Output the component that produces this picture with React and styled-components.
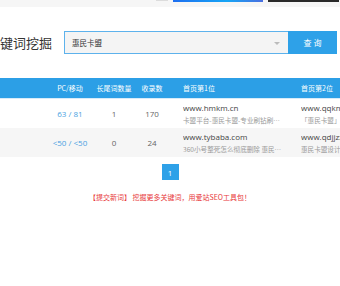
import React from 'react';
import styled, { createGlobalStyle } from 'styled-components';

const GlobalStyle = createGlobalStyle`
  html, body {
    margin: 0;
    padding: 0;
    background: #fff;
    overflow: hidden;
  }
  body {
    font-family: "Open Sans", "Noto Sans CJK SC", sans-serif;
    color: #555;
  }
`;

const rows = [
  {
    pcMobile: '63 / 81',
    longTail: '1',
    indexed: '170',
    first: { url: 'www.hmkm.cn', desc: '卡盟平台-惠民卡盟-专业刷钻刷赞平台' },
    second: { url: 'www.qqkm.net', desc: '「惠民卡盟」官方网站' },
  },
  {
    pcMobile: '<50 / <50',
    longTail: '0',
    indexed: '24',
    first: { url: 'www.tybaba.com', desc: '360小号整死怎么彻底删除 惠民卡盟' },
    second: { url: 'www.qdjjzx.com', desc: '惠民卡盟设计网站' },
  },
];

const App = () => {
  return (
    <Page>
      <GlobalStyle />
      <TopStrip>
        <Thumb $w="12px" $h="1px" $bg="#dcdcdc" />
        <Thumb $w="90px" $h="2px" $bg="linear-gradient(90deg, #1e6ff0, #16a5f5 60%, #4a6fe0)" />
        <Thumb $w="71px" $h="2px" $bg="#2a2a2a" />
      </TopStrip>

      <SearchRow>
        <Title>键词挖掘</Title>
        <InputBox>
          <InputText>惠民卡盟</InputText>
          <Caret />
        </InputBox>
        <SearchBtn>查 询</SearchBtn>
      </SearchRow>

      <TableWrap>
        <HeadRow>
          <Cell />
          <Cell $center>PC/移动</Cell>
          <Cell $center>长尾词数量</Cell>
          <Cell $center>收录数</Cell>
          <Cell $pad>首页第1位</Cell>
          <Cell $pad>首页第2位</Cell>
        </HeadRow>
        {rows.map((r, i) => (
          <BodyRow key={i} $alt={i % 2 === 1}>
            <Cell />
            <Cell $center>
              <LinkNum>{r.pcMobile}</LinkNum>
            </Cell>
            <Cell $center>{r.longTail}</Cell>
            <Cell $center>{r.indexed}</Cell>
            <Cell $pad>
              <SiteBlock>
                <SiteUrl>{r.first.url}</SiteUrl>
                <SiteDesc>{r.first.desc}</SiteDesc>
              </SiteBlock>
            </Cell>
            <Cell $pad>
              <SiteBlock>
                <SiteUrl>{r.second.url}</SiteUrl>
                <SiteDesc>{r.second.desc}</SiteDesc>
              </SiteBlock>
            </Cell>
          </BodyRow>
        ))}
      </TableWrap>

      <Pager>
        <PageNum>1</PageNum>
      </Pager>

      <Notice>【提交新词】 挖掘更多关键词，用爱站SEO工具包！</Notice>
    </Page>
  );
};

export default App;

const Page = styled.div`
  width: 340px;
  height: 286px;
  overflow: hidden;
  background: #fff;
`;

const TopStrip = styled.div`
  display: flex;
  align-items: flex-start;
  gap: 5px;
  height: 7px;
  padding-left: 156px;
  background: #f6f6f6;
`;

const Thumb = styled.div`
  flex: none;
  width: ${(p) => p.$w};
  height: ${(p) => p.$h};
  background: ${(p) => p.$bg};
`;

const SearchRow = styled.div`
  display: flex;
  align-items: center;
  margin-top: 24px;
  height: 23px;
`;

const Title = styled.h2`
  width: 64px;
  margin: 0;
  font-family: "Noto Sans CJK SC", sans-serif;
  font-size: 13px;
  font-weight: 400;
  color: #333;
  white-space: nowrap;
`;

const InputBox = styled.div`
  position: relative;
  display: flex;
  align-items: center;
  box-sizing: border-box;
  width: 224px;
  height: 23px;
  padding-left: 7px;
  border: 1px solid #5db2ec;
  border-right: none;
  background: #f4f4f4;
`;

const InputText = styled.span`
  font-family: "Noto Sans CJK SC", sans-serif;
  font-size: 7.5px;
  color: #333;
`;

const Caret = styled.span`
  position: absolute;
  right: 8px;
  top: 10px;
  width: 0;
  height: 0;
  border-left: 3px solid transparent;
  border-right: 3px solid transparent;
  border-top: 3px solid #bbb;
`;

const SearchBtn = styled.button`
  width: 49px;
  height: 23px;
  padding: 0;
  border: none;
  background: #2ea1e8;
  color: #fff;
  font-family: "Noto Sans CJK SC", sans-serif;
  font-size: 8px;
`;

const TableWrap = styled.div`
  margin-top: 24px;
  width: 340px;
  overflow: hidden;
`;

const cols = '45px 50px 38px 38px 118px 118px';

const HeadRow = styled.div`
  display: grid;
  grid-template-columns: ${cols};
  align-items: center;
  height: 20px;
  background: #2c9fe6;
  color: #fff;
  font-family: "Noto Sans CJK SC", sans-serif;
  font-size: 7px;
  border-bottom: 1px solid #d7ebf9;
`;

const BodyRow = styled.div`
  display: grid;
  grid-template-columns: ${cols};
  align-items: center;
  height: 29px;
  background: ${(p) => (p.$alt ? '#f6f6f6' : '#fff')};
  font-size: 8px;
  color: #666;
`;

const Cell = styled.div`
  box-sizing: border-box;
  min-width: 0;
  white-space: nowrap;
  text-align: ${(p) => (p.$center ? 'center' : 'left')};
  padding: ${(p) => (p.$pad ? '0 6px 0 12px' : '0')};
`;

const LinkNum = styled.span`
  color: #4a9fe2;
`;

const SiteBlock = styled.div`
  display: flex;
  flex-direction: column;
  gap: 2px;
`;

const SiteUrl = styled.span`
  font-size: 8px;
  color: #444;
  overflow: hidden;
  white-space: nowrap;
`;

const SiteDesc = styled.span`
  font-family: "Noto Sans CJK SC", sans-serif;
  font-size: 6.6px;
  color: #999;
  overflow: hidden;
  text-overflow: ellipsis;
  white-space: nowrap;
`;

const Pager = styled.div`
  display: flex;
  justify-content: center;
  margin-top: 7px;
`;

const PageNum = styled.span`
  display: flex;
  align-items: center;
  justify-content: center;
  width: 17px;
  height: 16px;
  background: #2ea1e8;
  color: #fff;
  font-size: 8px;
`;

const Notice = styled.p`
  margin: 12px 0 0;
  text-align: center;
  font-family: "Noto Sans CJK SC", sans-serif;
  font-size: 7px;
  color: #e8383a;
`;
